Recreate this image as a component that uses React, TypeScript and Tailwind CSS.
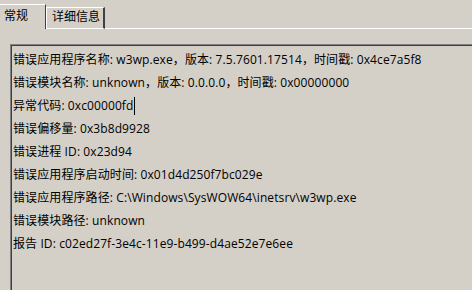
import React from "react";

const lines: React.ReactNode[] = [
  "错误应用程序名称: w3wp.exe，版本: 7.5.7601.17514，时间戳: 0x4ce7a5f8",
  "错误模块名称: unknown，版本: 0.0.0.0，时间戳: 0x00000000",
  <>
    异常代码: 0xc00000fd
    <span className="inline-block w-px h-[18px] bg-black align-middle -mt-[2px] ml-px" />
  </>,
  "错误偏移量: 0x3b8d9928",
  "错误进程 ID: 0x23d94",
  "错误应用程序启动时间: 0x01d4d250f7bc029e",
  "错误应用程序路径: C:\\Windows\\SysWOW64\\inetsrv\\w3wp.exe",
  "错误模块路径: unknown",
  "报告 ID: c02ed27f-3e4c-11e9-b499-d4ae52e7e6ee",
];

export default function App() {
  return (
    <div
      className="w-[472px] h-[290px] bg-[#d4d0c8] overflow-hidden flex flex-col text-black text-[12px]"
      style={{ fontFamily: '"Open Sans", "Noto Sans CJK SC", sans-serif' }}
    >
      {/* Tabs */}
      <div className="flex items-end h-[29px] shrink-0">
        <div className="w-[46px] h-[25px] border-t border-white border-r border-r-[#404040] flex items-start pl-[4px] pt-[3px] leading-[16px]">
          常规
        </div>
        <div className="w-[59px] h-[22px] border-t border-l border-white border-b border-b-white border-r-2 border-r-[#404040] flex items-start pl-[5px] pt-[1px] leading-[16px]">
          详细信息
        </div>
        <div className="flex-1 border-b border-white" />
      </div>
      {/* Panel */}
      <div className="flex-1 flex flex-col pl-[10px] pt-[15px]">
        <div className="flex-1 border-t border-l border-[#808080]">
          <div className="h-full border-t border-l border-[#404040] pl-[1px] pt-[2px] tracking-[0.1px]">
            {lines.map((l, i) => (
              <div key={i} className="leading-[23px] whitespace-nowrap">
                {l}
              </div>
            ))}
          </div>
        </div>
      </div>
    </div>
  );
}
